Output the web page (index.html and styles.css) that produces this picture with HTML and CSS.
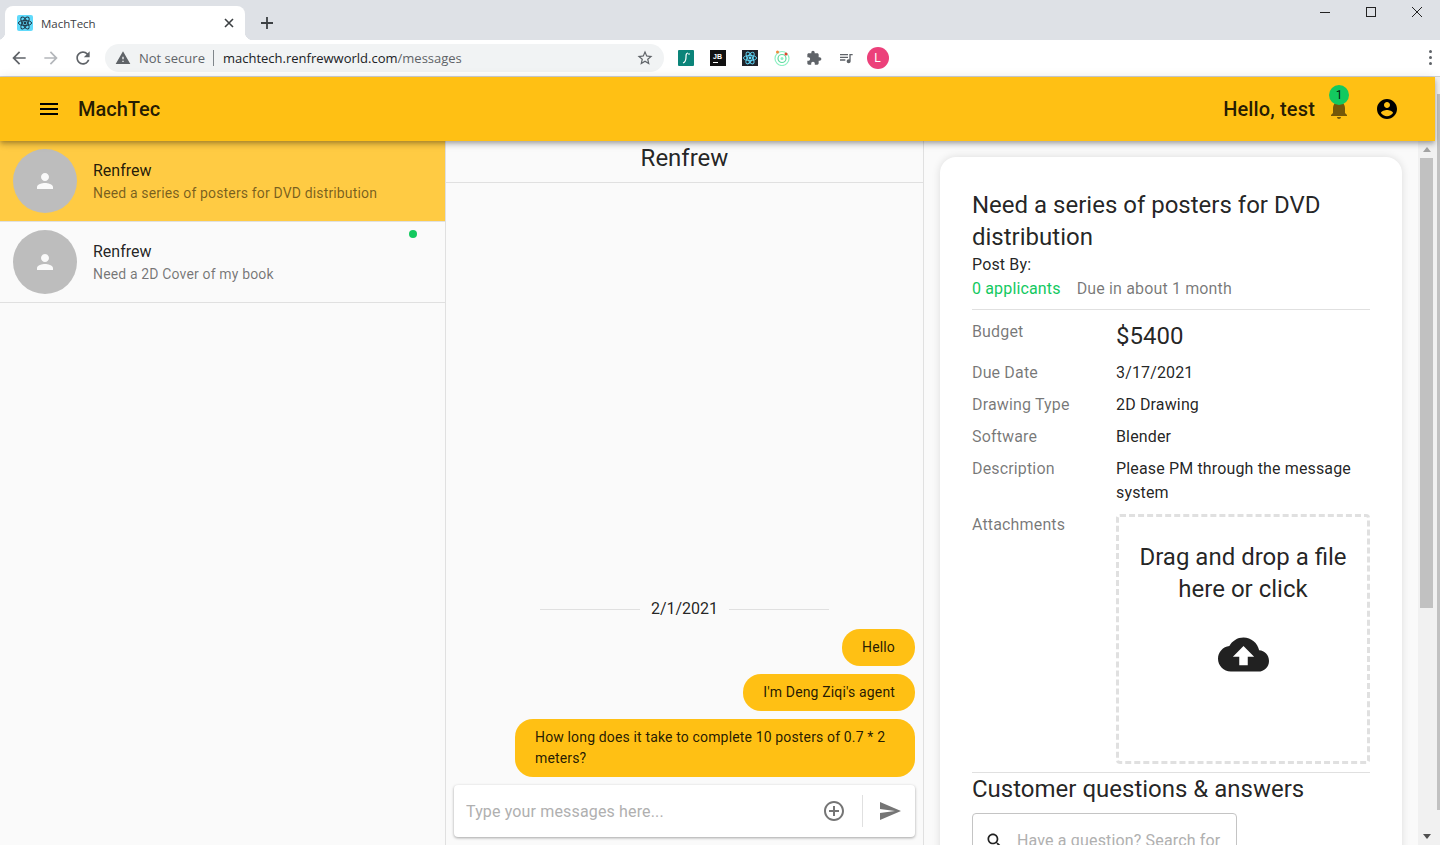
FILE: index.html
```html
<!DOCTYPE HTML>
<html lang="en">
<head>
  <meta charset="UTF-8">
  <meta name="viewport" content="width=device-width, initial-scale=1.0">
  <title>MachTech</title>
  <link rel="stylesheet" href="styles.css">
</head>
<body>
  <!-- Browser window top -->
  <div class="tab-strip">
    <div class="tab">
      <svg class="favicon" viewBox="0 0 16 16">
        <rect width="16" height="16" rx="2" fill="#61dafb"/>
        <g fill="none" stroke="#1f3a4a" stroke-width="1">
          <ellipse cx="8" cy="8" rx="6.6" ry="2.6"/>
          <ellipse cx="8" cy="8" rx="6.6" ry="2.6" transform="rotate(60 8 8)"/>
          <ellipse cx="8" cy="8" rx="6.6" ry="2.6" transform="rotate(120 8 8)"/>
        </g>
        <circle cx="8" cy="8" r="1.4" fill="#1f3a4a"/>
      </svg>
      <span class="tab-title">MachTech</span>
      <svg class="tab-close" viewBox="0 0 10 10"><path d="M1 1l8 8M9 1l-8 8" stroke="#3c4043" stroke-width="1.6" fill="none"/></svg>
    </div>
    <svg class="new-tab" viewBox="0 0 12 12"><path d="M6 0v12M0 6h12" stroke="#3c4043" stroke-width="1.8" fill="none"/></svg>
    <div class="window-controls">
      <svg viewBox="0 0 46 24"><path d="M18 12.5h10" stroke="#222" fill="none"/></svg>
      <svg viewBox="0 0 46 24"><rect x="18.5" y="7.5" width="9" height="9" stroke="#222" stroke-width="1" fill="none"/></svg>
      <svg viewBox="0 0 46 24"><path d="M18 7l10 10M28 7L18 17" stroke="#222" fill="none"/></svg>
    </div>
  </div>

  <div class="toolbar">
    <button class="nav-btn">
      <svg viewBox="0 0 24 24"><path fill="#5f6368" d="M20 11H7.83l5.59-5.59L12 4l-8 8 8 8 1.41-1.41L7.83 13H20v-2z"/></svg>
    </button>
    <button class="nav-btn">
      <svg viewBox="0 0 24 24"><path fill="#b4b7bb" d="M12 4l-1.41 1.41L16.17 11H4v2h12.17l-5.58 5.59L12 20l8-8z"/></svg>
    </button>
    <button class="nav-btn">
      <svg viewBox="0 0 24 24"><path fill="#5f6368" d="M17.65 6.35C16.2 4.9 14.21 4 12 4c-4.42 0-7.99 3.58-7.99 8s3.57 8 7.99 8c3.73 0 6.84-2.55 7.73-6h-2.08c-.82 2.33-3.04 4-5.65 4-3.31 0-6-2.69-6-6s2.69-6 6-6c1.66 0 3.14.69 4.22 1.78L13 11h7V4l-2.35 2.35z"/></svg>
    </button>
    <div class="address-bar">
      <svg class="warn-icon" viewBox="0 0 24 24"><path fill="#5f6368" d="M1 21h22L12 2 1 21zm12-3h-2v-2h2v2zm0-4h-2v-4h2v4z"/></svg>
      <span class="not-secure">Not secure</span>
      <span class="url"><b>machtech.renfrewworld.com</b>/messages</span>
      <svg class="star-icon" viewBox="0 0 24 24"><path fill="#5f6368" d="M22 9.24l-7.19-.62L12 2 9.19 8.63 2 9.24l5.46 4.73L5.82 21 12 17.27 18.18 21l-1.63-7.03L22 9.24zM12 15.4l-3.76 2.27 1-4.28-3.32-2.88 4.38-.38L12 6.1l1.71 4.04 4.38.38-3.32 2.88 1 4.28L12 15.4z"/></svg>
    </div>
    <div class="ext-btn">
      <svg viewBox="0 0 16 16">
        <rect width="16" height="16" rx="1" fill="#0b8479"/>
        <path d="M10 3C8 3 8 5 8 7s0 5-3 6" stroke="#fff" stroke-width="1.2" fill="none"/>
        <path d="M11 3v2" stroke="#fff" fill="none"/>
      </svg>
    </div>
    <div class="ext-btn">
      <svg viewBox="0 0 16 16">
        <rect width="16" height="16" fill="#111"/>
        <text x="3" y="9" class="jb-text">JB</text>
        <path d="M3 12.5h5" stroke="#fff" fill="none"/>
      </svg>
    </div>
    <div class="ext-btn">
      <svg viewBox="0 0 16 16">
        <rect width="16" height="16" fill="#20232a"/>
        <g fill="none" stroke="#61dafb" stroke-width=".9">
          <ellipse cx="8" cy="8" rx="6.6" ry="2.6"/>
          <ellipse cx="8" cy="8" rx="6.6" ry="2.6" transform="rotate(60 8 8)"/>
          <ellipse cx="8" cy="8" rx="6.6" ry="2.6" transform="rotate(120 8 8)"/>
        </g>
        <circle cx="8" cy="8" r="1.4" fill="#61dafb"/>
      </svg>
    </div>
    <div class="ext-btn">
      <svg viewBox="0 0 16 16">
        <circle cx="8" cy="8.5" r="7" fill="none" stroke="#8ff0c4" stroke-width="1.2"/>
        <circle cx="8" cy="8.5" r="4" fill="none" stroke="#5fdc9f" stroke-width="1.2"/>
        <circle cx="8" cy="8.5" r="1.5" fill="#8ff0c4"/>
        <circle cx="3.5" cy="2" r="1.5" fill="#f08a3c"/>
        <circle cx="12" cy="4" r="1.5" fill="#e5432d"/>
      </svg>
    </div>
    <div class="ext-btn">
      <svg viewBox="0 0 24 24"><path fill="#5f6368" d="M20.5 11H19V7c0-1.1-.9-2-2-2h-4V3.5C13 2.12 11.88 1 10.5 1S8 2.12 8 3.5V5H4c-1.1 0-1.99.9-1.99 2v3.8H3.5c1.49 0 2.7 1.21 2.7 2.7s-1.21 2.7-2.7 2.7H2V20c0 1.1.9 2 2 2h3.8v-1.5c0-1.49 1.21-2.7 2.7-2.7 1.49 0 2.7 1.21 2.7 2.7V22H17c1.1 0 2-.9 2-2v-4h1.5c1.38 0 2.5-1.12 2.5-2.5S21.88 11 20.5 11z"/></svg>
    </div>
    <div class="ext-btn">
      <svg viewBox="0 0 24 24"><path fill="#5f6368" d="M15 6H3v2h12V6zm0 4H3v2h12v-2zM3 16h8v-2H3v2zM17 6v8.18c-.31-.11-.65-.18-1-.18-1.66 0-3 1.34-3 3s1.34 3 3 3 3-1.34 3-3V8h3V6h-5z"/></svg>
    </div>
    <div class="ext-btn"><span class="profile">L</span></div>
    <div class="kebab"><i></i><i></i><i></i></div>
  </div>

  <div class="page">
    <div class="app">
      <header class="app-bar">
        <svg class="menu-icon" viewBox="0 0 24 24"><path d="M3 18h18v-2H3v2zm0-5h18v-2H3v2zm0-7v2h18V6H3z"/></svg>
        <h1 class="brand">MachTec</h1>
        <span class="hello">Hello, test</span>
        <div class="bell">
          <svg viewBox="0 0 24 24"><path d="M12 22c1.1 0 2-.9 2-2h-4c0 1.1.89 2 2 2zm6-6v-5c0-3.07-1.64-5.64-4.5-6.32V4c0-.83-.67-1.5-1.5-1.5s-1.5.67-1.5 1.5v.68C7.63 5.36 6 7.92 6 11v5l-2 2v1h16v-1l-2-2z"/></svg>
          <span class="badge">1</span>
        </div>
        <svg class="account-icon" viewBox="0 0 24 24"><path d="M12 2C6.48 2 2 6.48 2 12s4.48 10 10 10 10-4.48 10-10S17.52 2 12 2zm0 3c1.66 0 3 1.34 3 3s-1.34 3-3 3-3-1.34-3-3 1.34-3 3-3zm0 14.2c-2.5 0-4.71-1.28-6-3.22.03-1.99 4-3.08 6-3.08 1.99 0 5.97 1.09 6 3.08-1.29 1.94-3.5 3.22-6 3.22z"/></svg>
      </header>

      <div class="columns">
        <!-- Conversation list -->
        <aside class="threads">
          <div class="thread active">
            <div class="avatar"><svg viewBox="0 0 24 24"><path d="M12 12c2.21 0 4-1.79 4-4s-1.79-4-4-4-4 1.79-4 4 1.79 4 4 4zm0 2c-2.67 0-8 1.34-8 4v2h16v-2c0-2.66-5.33-4-8-4z"/></svg></div>
            <div>
              <div class="thread-name">Renfrew</div>
              <div class="thread-sub">Need a series of posters for DVD distribution</div>
            </div>
          </div>
          <div class="thread">
            <div class="avatar"><svg viewBox="0 0 24 24"><path d="M12 12c2.21 0 4-1.79 4-4s-1.79-4-4-4-4 1.79-4 4 1.79 4 4 4zm0 2c-2.67 0-8 1.34-8 4v2h16v-2c0-2.66-5.33-4-8-4z"/></svg></div>
            <div>
              <div class="thread-name">Renfrew</div>
              <div class="thread-sub">Need a 2D Cover of my book</div>
            </div>
            <span class="online-dot"></span>
          </div>
        </aside>

        <!-- Chat -->
        <section class="chat">
          <div class="chat-head">Renfrew</div>
          <div class="messages">
            <div class="date-line"><span>2/1/2021</span></div>
            <div class="bubble">Hello</div>
            <div class="bubble">I'm Deng Ziqi's agent</div>
            <div class="bubble">How long does it take to complete 10 posters of 0.7 * 2 meters?</div>
          </div>
          <div class="composer">
            <input class="composer-input" type="text" placeholder="Type your messages here...">
            <svg class="composer-icon" viewBox="0 0 24 24"><path d="M13 7h-2v4H7v2h4v4h2v-4h4v-2h-4V7zm-1-5C6.48 2 2 6.48 2 12s4.48 10 10 10 10-4.48 10-10S17.52 2 12 2zm0 18c-4.41 0-8-3.59-8-8s3.59-8 8-8 8 3.59 8 8-3.59 8-8 8z"/></svg>
            <span class="composer-sep"></span>
            <svg class="composer-icon" viewBox="0 0 24 24"><path d="M2.01 21L23 12 2.01 3 2 10l15 2-15 2z"/></svg>
          </div>
        </section>

        <!-- Job details -->
        <section class="details">
          <div class="details-scroll">
            <div class="card">
              <h2 class="card-title">Need a series of posters for DVD distribution</h2>
              <div class="post-by">Post By:</div>
              <div class="meta">
                <span class="applicants">0 applicants</span>
                <span class="due">Due in about 1 month</span>
              </div>
              <hr class="rule">
              <div class="info-grid">
                <div class="info-label">Budget</div>
                <div class="info-value budget">$5400</div>
                <div class="info-label">Due Date</div>
                <div class="info-value">3/17/2021</div>
                <div class="info-label">Drawing Type</div>
                <div class="info-value">2D Drawing</div>
                <div class="info-label">Software</div>
                <div class="info-value">Blender</div>
                <div class="info-label">Description</div>
                <div class="info-value">Please PM through the message system</div>
                <div class="info-label">Attachments</div>
                <div class="dropzone">
                  <p>Drag and drop a file here or click</p>
                  <svg viewBox="0 0 24 24"><path d="M19.35 10.04C18.67 6.59 15.64 4 12 4 9.11 4 6.6 5.64 5.35 8.04 2.34 8.36 0 10.91 0 14c0 3.31 2.69 6 6 6h13c2.76 0 5-2.24 5-5 0-2.64-2.05-4.78-4.65-4.96zM14 13v4h-4v-4H7l5-5 5 5h-3z"/></svg>
                </div>
              </div>
              <hr class="rule rule-qa">
              <h2 class="card-title">Customer questions &amp; answers</h2>
              <div class="qa-search">
                <svg viewBox="0 0 24 24"><path d="M15.5 14h-.79l-.28-.27C15.41 12.59 16 11.11 16 9.5 16 5.91 13.09 3 9.5 3S3 5.91 3 9.5 5.91 16 9.5 16c1.61 0 3.09-.59 4.23-1.57l.27.28v.79l5 4.99L20.49 19l-4.99-5zm-6 0C7.01 14 5 11.99 5 9.5S7.01 5 9.5 5 14 7.01 14 9.5 11.99 14 9.5 14z"/></svg>
                <span>Have a question? Search for</span>
              </div>
            </div>
          </div>
          <div class="inner-scrollbar">
            <span class="arrow-up"></span>
            <span class="inner-thumb"></span>
            <span class="arrow-down"></span>
          </div>
        </section>
      </div>
    </div>
    <div class="outer-scrollbar"><span></span></div>
  </div>
</body>
</html>
```

FILE: styles.css
```css
* {
  box-sizing: border-box;
}
html, body {
  margin: 0;
  height: 845px;
  overflow: hidden;
}
body {
  font-family: Roboto, 'Liberation Sans', sans-serif;
  color: rgba(0, 0, 0, 0.87);
  background: #fafafa;
}

/* Browser top */
.tab-strip {
  height: 40px;
  background: #dee1e6;
  display: flex;
  align-items: flex-end;
  padding-left: 5px;
}
.tab {
  position: relative;
  width: 240px;
  height: 34px;
  background: #fff;
  border-radius: 8px 8px 0 0;
  display: flex;
  align-items: center;
  padding: 0 11px 0 12px;
}
.tab::before, .tab::after {
  content: "";
  position: absolute;
  bottom: 0;
  width: 8px;
  height: 8px;
}
.tab::before {
  left: -8px;
  background: radial-gradient(circle at 0 0, #dee1e6 8px, #fff 8.5px);
}
.tab::after {
  right: -8px;
  background: radial-gradient(circle at 100% 0, #dee1e6 8px, #fff 8.5px);
}
.favicon {
  width: 16px;
  height: 16px;
  flex: none;
}
.tab-title {
  font-family: 'Open Sans', sans-serif;
  font-size: 11.5px;
  color: #3c4043;
  margin-left: 8px;
  flex: 1;
}
.tab-close {
  width: 10px;
  height: 10px;
}
.new-tab {
  width: 12px;
  height: 12px;
  margin: 0 0 11px 16px;
}
.window-controls {
  margin-left: auto;
  align-self: flex-start;
  display: flex;
}
.window-controls svg {
  width: 46px;
  height: 24px;
  display: block;
}
.toolbar {
  height: 37px;
  background: #fff;
  border-bottom: 1px solid #d0d1d3;
  display: flex;
  align-items: center;
  padding: 0 0 1px 3px;
}
.nav-btn {
  width: 32px;
  height: 32px;
  border: none;
  background: none;
  padding: 6px;
  flex: none;
}
.nav-btn svg {
  width: 20px;
  height: 20px;
  display: block;
}
.address-bar {
  flex: 1;
  height: 28px;
  margin: 0 6px 0 6px;
  background: #f1f3f4;
  border-radius: 14px;
  display: flex;
  align-items: center;
  padding: 0 10px;
  font-family: 'Open Sans', sans-serif;
  font-size: 13px;
  color: #5f6368;
}
.warn-icon {
  width: 16px;
  height: 16px;
  flex: none;
}
.not-secure {
  margin-left: 8px;
  padding-right: 8px;
  border-right: 1px solid #80868b;
  line-height: 16px;
}
.url {
  margin-left: 9px;
  flex: 1;
}
.url b {
  font-weight: 400;
  color: #202124;
}
.star-icon {
  width: 18px;
  height: 18px;
  flex: none;
}
.ext-btn {
  width: 32px;
  height: 32px;
  flex: none;
  display: flex;
  align-items: center;
  justify-content: center;
}
.ext-btn svg {
  width: 16px;
  height: 16px;
}
.jb-text {
  font-family: 'Liberation Sans', sans-serif;
  font-size: 7px;
  font-weight: 700;
  fill: #fff;
}
.profile {
  width: 22px;
  height: 22px;
  border-radius: 50%;
  background: #ec407a;
  color: #fff;
  font-size: 12px;
  display: flex;
  align-items: center;
  justify-content: center;
}
.kebab {
  flex: 1;
  display: flex;
  flex-direction: column;
  align-items: flex-end;
  gap: 3px;
  padding-right: 8px;
}
.kebab i {
  width: 3px;
  height: 3px;
  border-radius: 50%;
  background: #5f6368;
}

/* App */
.page {
  height: 768px;
  display: flex;
}
.app {
  flex: 1;
  min-width: 0;
  display: flex;
  flex-direction: column;
}
.outer-scrollbar {
  width: 5px;
  background: #f1f1f1;
  padding-top: 17px;
  display: flex;
  justify-content: flex-end;
  align-items: flex-start;
}
.outer-scrollbar span {
  width: 3px;
  height: 716px;
  background: #c1c1c1;
}
.app-bar {
  position: relative;
  z-index: 2;
  height: 64px;
  flex: none;
  background: #ffc014;
  box-shadow: 0 2px 4px -1px rgba(0, 0, 0, 0.2), 0 4px 5px 0 rgba(0, 0, 0, 0.14), 0 1px 10px 0 rgba(0, 0, 0, 0.12);
  display: flex;
  align-items: center;
  padding: 0 36px 0 37px;
}
.menu-icon {
  width: 24px;
  height: 24px;
}
.brand {
  font-size: 20px;
  font-weight: 500;
  line-height: 32px;
  margin: 0 0 0 17px;
  flex: 1;
}
.hello {
  font-size: 20px;
  font-weight: 500;
  letter-spacing: 0.15px;
}
.bell {
  position: relative;
  width: 24px;
  height: 24px;
  margin-left: 12px;
}
.bell svg {
  display: block;
  fill: rgba(0, 0, 0, 0.54);
}
.badge {
  position: absolute;
  top: -22px;
  left: 2px;
  top: -22px;
  width: 20px;
  height: 20px;
  margin: 10px 0 0 0;
  border-radius: 50%;
  background: #13c95f;
  font-size: 12px;
  display: flex;
  align-items: center;
  justify-content: center;
}
.account-icon {
  width: 24px;
  height: 24px;
  margin-left: 24px;
}
.columns {
  flex: 1;
  min-height: 0;
  display: flex;
}

/* Threads */
.threads {
  width: 446px;
  flex: none;
  border-right: 1px solid #e0e0e0;
}
.thread {
  position: relative;
  height: 81px;
  display: flex;
  align-items: center;
  gap: 16px;
  padding: 0 13px 1px;
  border-bottom: 1px solid #e0e0e0;
}
.thread.active {
  background: #ffcb43;
}
.avatar {
  width: 64px;
  height: 64px;
  border-radius: 50%;
  background: #bdbdbd;
  flex: none;
  display: flex;
  align-items: center;
  justify-content: center;
}
.avatar svg {
  width: 24px;
  height: 24px;
  fill: #fafafa;
}
.thread-name {
  font-size: 16px;
  line-height: 24px;
}
.thread-sub {
  font-size: 14px;
  line-height: 20px;
  letter-spacing: 0.15px;
  color: rgba(0, 0, 0, 0.54);
}
.online-dot {
  position: absolute;
  left: 409px;
  top: 8px;
  width: 8px;
  height: 8px;
  border-radius: 50%;
  background: #13c95f;
}

/* Chat */
.chat {
  width: 478px;
  flex: none;
  border-right: 1px solid #e0e0e0;
  display: flex;
  flex-direction: column;
}
.chat-head {
  height: 42px;
  flex: none;
  border-bottom: 1px solid #e0e0e0;
  text-align: center;
  font-size: 24px;
  line-height: 34px;
}
.messages {
  flex: 1;
  min-height: 0;
  display: flex;
  flex-direction: column;
  justify-content: flex-end;
  align-items: flex-end;
  gap: 8px;
  padding: 0 8px;
}
.date-line {
  align-self: center;
  display: flex;
  align-items: center;
  gap: 11px;
  font-size: 16px;
  line-height: 24px;
}
.date-line::before, .date-line::after {
  content: "";
  width: 100px;
  height: 1px;
  background: #e0e0e0;
}
.bubble {
  max-width: 400px;
  background: #ffc014;
  border-radius: 18px;
  padding: 8px 20px;
  font-size: 14px;
  line-height: 21px;
  letter-spacing: 0.15px;
}
.composer {
  height: 52px;
  flex: none;
  margin: 8px 8px 8px;
  background: #fff;
  border-radius: 4px;
  box-shadow: 0 1px 3px rgba(0, 0, 0, 0.35);
  display: flex;
  align-items: center;
  padding: 0 13px 0 12px;
}
.composer-input {
  flex: 1;
  min-width: 0;
  border: none;
  outline: none;
  background: none;
  padding: 0;
  font-family: inherit;
  font-size: 16px;
  letter-spacing: 0.15px;
}
.composer-input::placeholder {
  color: #b0b0b0;
  opacity: 1;
}
.composer-icon {
  width: 24px;
  height: 24px;
  fill: #757575;
  flex: none;
}
.composer-sep {
  width: 1px;
  height: 32px;
  background: #e0e0e0;
  margin: 0 15px 0 16px;
}

/* Details */
.details {
  flex: 1;
  min-width: 0;
  display: flex;
}
.details-scroll {
  flex: 1;
  min-width: 0;
  height: 704px;
  overflow: hidden;
  padding: 16px 16px 0;
}
.card {
  background: #fff;
  border-radius: 16px;
  padding: 32px;
  box-shadow: 0 0 8px rgba(0, 0, 0, 0.12);
}
.card-title {
  margin: 0;
  font-size: 24px;
  font-weight: 400;
  line-height: 32px;
}
.post-by {
  font-size: 16px;
  line-height: 24px;
  letter-spacing: 0.15px;
}
.meta {
  font-size: 16px;
  line-height: 24px;
  letter-spacing: 0.15px;
  display: flex;
  gap: 16px;
}
.applicants {
  color: #13c95f;
}
.due {
  color: rgba(0, 0, 0, 0.54);
}
.rule {
  border: none;
  border-top: 1px solid #e0e0e0;
  margin: 8px 0 0;
}
.info-grid {
  display: grid;
  grid-template-columns: 144px 1fr;
  row-gap: 8px;
  padding-top: 10px;
  font-size: 16px;
  line-height: 24px;
  letter-spacing: 0.15px;
}
.info-label {
  color: rgba(0, 0, 0, 0.54);
}
.budget {
  font-size: 24px;
  line-height: 33px;
  letter-spacing: 0;
}
.dropzone {
  height: 250px;
  border: 3px dashed #e0e0e0;
  border-radius: 4px;
  text-align: center;
  font-size: 24px;
  line-height: 32px;
  letter-spacing: 0;
  margin-top: 1px;
}
.dropzone p {
  margin: 24px 0;
}
.dropzone svg {
  width: 51px;
  height: 51px;
  fill: #212121;
}
.rule-qa {
  margin-top: 8px;
}
.qa-search {
  width: 265px;
  height: 70px;
  margin-top: 8px;
  border: 1px solid #c4c4c4;
  border-radius: 4px;
  display: flex;
  align-items: flex-start;
  gap: 12px;
  padding: 17px 12px 0;
  font-size: 16px;
  line-height: 20px;
  letter-spacing: 0.15px;
  color: #b0b0b0;
  white-space: nowrap;
}
.qa-search svg {
  width: 20px;
  height: 20px;
  flex: none;
  fill: #212121;
}
.inner-scrollbar {
  position: relative;
  width: 17px;
  flex: none;
  background: #f1f1f1;
  display: flex;
  flex-direction: column;
  align-items: center;
  height: 704px;
}
.inner-thumb {
  width: 13px;
  height: 450px;
  background: #c1c1c1;
  margin-top: 6px;
}
.arrow-up, .arrow-down {
  width: 0;
  height: 0;
  border-left: 4px solid transparent;
  border-right: 4px solid transparent;
}
.arrow-up {
  margin-top: 6px;
  border-bottom: 5px solid #a3a3a3;
}
.arrow-down {
  margin-top: auto;
  margin-bottom: 6px;
  border-top: 5px solid #505050;
}
```
